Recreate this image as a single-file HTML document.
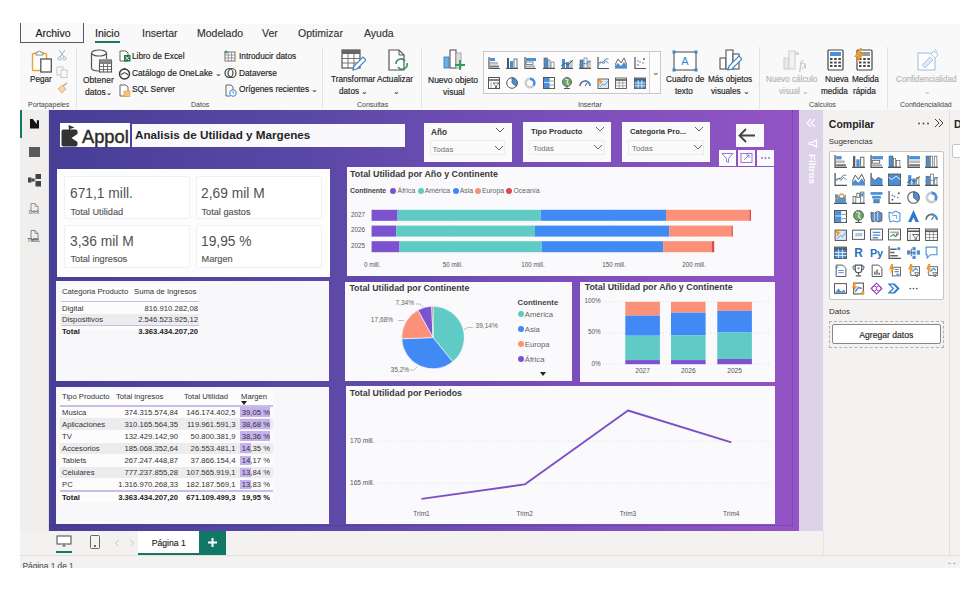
<!DOCTYPE html>
<html><head><meta charset="utf-8"><style>
*{margin:0;padding:0;box-sizing:border-box}
html,body{width:974px;height:589px;overflow:hidden;background:#fff;font-family:"Liberation Sans",sans-serif;color:#252423}
.a{position:absolute}
.t{position:absolute;white-space:nowrap;line-height:1}
.s{-webkit-text-stroke:0.15px currentColor}
#app{position:absolute;left:20px;top:24px;width:940px;height:544px;background:#f3f2f1;overflow:hidden}
#ribbon{position:absolute;left:20px;top:24px;width:940px;height:86px;background:#f9f9f9}
#canvas{position:absolute;left:49px;top:110px;width:750px;height:421px;background:linear-gradient(to right,#473e96 0%,#5a48a6 35%,#7a4fbb 68%,#9354c5 100%)}
.card{position:absolute;background:#faf9fc}
</style></head><body>

<svg width="0" height="0" style="position:absolute">
<defs>
<symbol id="sbar" viewBox="0 0 12 12"><path d="M1 0v11.5h11" stroke="#555" stroke-width="1.2" fill="none"/><rect x="2" y="1" width="5" height="3" fill="#4a90d9"/><rect x="2" y="5" width="8" height="2.5" fill="#bbb"/><rect x="2" y="8.5" width="9" height="2" fill="#777"/></symbol>
<symbol id="scol" viewBox="0 0 12 12"><path d="M0 11.5h12" stroke="#555" stroke-width="1.2"/><rect x="1" y="1" width="2" height="10" fill="#555"/><rect x="4" y="4" width="3" height="7" fill="#4a90d9"/><rect x="8" y="2" width="3" height="9" fill="#fff" stroke="#555" stroke-width="0.8"/></symbol>
<symbol id="cbar" viewBox="0 0 12 12"><path d="M1 0v11.5h11" stroke="#555" stroke-width="1.2" fill="none"/><rect x="2" y="1" width="10" height="3" fill="#4a90d9"/><rect x="2" y="5" width="7" height="2.5" fill="#fff" stroke="#555" stroke-width="0.7"/><rect x="2" y="8.5" width="9" height="2" fill="#aaa"/></symbol>
<symbol id="ccol" viewBox="0 0 12 12"><path d="M0 11.5h12" stroke="#555" stroke-width="1.2"/><rect x="1" y="1" width="3.5" height="10" fill="#4a90d9" stroke="#555" stroke-width="0.6"/><rect x="5" y="3" width="2" height="8" fill="#fff" stroke="#555" stroke-width="0.6"/><rect x="8" y="5" width="3" height="6" fill="#fff" stroke="#555" stroke-width="0.6"/></symbol>
<symbol id="lcol" viewBox="0 0 12 12"><path d="M0 11.5h12" stroke="#555" stroke-width="1.2"/><rect x="1" y="2" width="3" height="9" fill="#4a90d9"/><rect x="5" y="5" width="3" height="6" fill="#4a90d9"/><rect x="9" y="4" width="2" height="7" fill="#fff" stroke="#555" stroke-width="0.6"/><path d="M0 9l4-3 3 2 5-5" stroke="#555" stroke-width="0.9" fill="none"/></symbol>
<symbol id="lcc" viewBox="0 0 12 12"><path d="M0 11.5h12" stroke="#555" stroke-width="1.2"/><rect x="1" y="3" width="3" height="8" fill="#4a90d9" stroke="#555" stroke-width="0.6"/><rect x="5" y="1" width="3" height="10" fill="#fff" stroke="#555" stroke-width="0.6"/><rect x="9" y="4" width="2" height="7" fill="#fff" stroke="#555" stroke-width="0.6"/><path d="M0 8l4-2 3 1 5-3" stroke="#4a90d9" stroke-width="0.9" fill="none"/></symbol>
<symbol id="line" viewBox="0 0 12 12"><path d="M1 0v11.5h11" stroke="#555" stroke-width="1.2" fill="none"/><path d="M1.5 8l3-3 2 2 2-3 3 2" stroke="#4a90d9" stroke-width="0.9" fill="none"/><path d="M1.5 6l3-1 2 0 2-3 3 0" stroke="#555" stroke-width="0.7" fill="none"/></symbol>
<symbol id="area" viewBox="0 0 12 12"><path d="M0 11h12V8L9 1 6 6 3 2 0 8z" fill="#fff" stroke="#555" stroke-width="0.9"/><path d="M0 11h12V9L9 5 6 9 3 6 0 9z" fill="#4a90d9"/></symbol>
<symbol id="scat" viewBox="0 0 12 12"><path d="M1 0v11.5h11" stroke="#555" stroke-width="1.2" fill="none"/><circle cx="4" cy="8" r="0.8" fill="#555"/><circle cx="6" cy="5" r="0.8" fill="#4a90d9"/><circle cx="9" cy="6" r="0.8" fill="#4a90d9"/><circle cx="10" cy="2" r="0.9" fill="#555"/><circle cx="4" cy="4" r="0.8" fill="#4a90d9"/></symbol>
<symbol id="slic" viewBox="0 0 12 12"><rect x="0.5" y="0.5" width="11" height="11" fill="#fff" stroke="#555"/><path d="M0.5 3h11" stroke="#555" stroke-width="1.5"/><path d="M3 5v6" stroke="#aaa"/><path d="M5 6h6l-2.5 3v2h-1v-2z" fill="#fff" stroke="#555" stroke-width="0.8"/></symbol>
<symbol id="pie" viewBox="0 0 12 12"><circle cx="6" cy="6" r="5.3" fill="#fff" stroke="#555" stroke-width="1"/><path d="M6 6V0.7A5.3 5.3 0 0 1 10 9.5z" fill="#4a90d9" stroke="#555" stroke-width="0.7"/></symbol>
<symbol id="donut" viewBox="0 0 12 12"><circle cx="6" cy="6" r="4.3" fill="none" stroke="#ccc" stroke-width="2.4"/><path d="M6 1.7A4.3 4.3 0 0 1 9.5 8.5" fill="none" stroke="#4a90d9" stroke-width="2.4"/></symbol>
<symbol id="tree" viewBox="0 0 12 12"><rect x="0.5" y="0.5" width="11" height="11" fill="#fff" stroke="#555"/><rect x="1" y="1" width="6" height="10" fill="#4a90d9"/><path d="M1 5.5h6M7 1v10M7 4h4.5M7 8h4.5M9 8v3.5" stroke="#fff" stroke-width="0.7"/><path d="M7 4h4.5M7 8h4.5" stroke="#555" stroke-width="0.6"/></symbol>
<symbol id="map" viewBox="0 0 12 12"><circle cx="6" cy="5" r="4.5" fill="#6aa86a" stroke="#555" stroke-width="0.9"/><path d="M4 2l3 1-1 3 2 2" stroke="#c9f0c9" stroke-width="1.2" fill="none"/><path d="M6 9.5v2M3 11.5h6" stroke="#555" stroke-width="1"/></symbol>
<symbol id="gauge" viewBox="0 0 12 12"><path d="M1 9A5 5 0 0 1 11 9" fill="none" stroke="#666" stroke-width="1.5"/><path d="M6 4A5 5 0 0 1 11 9" fill="none" stroke="#4a90d9" stroke-width="2"/><path d="M6 9l2-3" stroke="#555" stroke-width="1"/></symbol>
<symbol id="card" viewBox="0 0 12 12"><rect x="1" y="2" width="10.5" height="9.5" fill="#dbe9f7" stroke="#555" stroke-width="0.9"/><path d="M3 1L1 5h2l-1 4 4-5H4l1-3z" fill="#f29a2e"/><path d="M3 10l3-3 2 1 3-4" stroke="#4a90d9" stroke-width="0.8" fill="none"/></symbol>
<symbol id="card2" viewBox="0 0 12 12"><rect x="0.5" y="2" width="11" height="8.5" fill="#fff" stroke="#555" stroke-width="0.9"/><path d="M2.5 4.5h7v3.5h-7z" fill="#cfe2f5"/><text x="6" y="7.6" font-size="3.6" text-anchor="middle" fill="#4a90d9" font-family="Liberation Sans">123</text></symbol>
<symbol id="table" viewBox="0 0 12 12"><rect x="0.5" y="1" width="11" height="10.5" fill="#fff" stroke="#555" stroke-width="0.9"/><path d="M0.5 3h11" stroke="#555" stroke-width="1.6"/><path d="M0.5 6h11M0.5 8.8h11M4.2 3v8.5M7.8 3v8.5" stroke="#777" stroke-width="0.6"/></symbol>
<symbol id="matrix" viewBox="0 0 12 12"><rect x="0.5" y="1" width="11" height="10.5" fill="#4a90d9" stroke="#555" stroke-width="0.9"/><path d="M0.5 3h11" stroke="#555" stroke-width="1.6"/><path d="M0.5 6h11M0.5 8.8h11M4.2 3v8.5M7.8 3v8.5" stroke="#fff" stroke-width="0.7"/></symbol>
<symbol id="bar100" viewBox="0 0 12 12"><path d="M1 0v11.5h11" stroke="#555" stroke-width="1.2" fill="none"/><rect x="2" y="1" width="10" height="3" fill="#4a90d9"/><rect x="2" y="5" width="10" height="2.5" fill="#bbb"/><rect x="2" y="8.5" width="10" height="2" fill="#777"/></symbol>
<symbol id="col100" viewBox="0 0 12 12"><path d="M0 11.5h12" stroke="#555" stroke-width="1.2"/><rect x="1" y="1" width="3" height="10" fill="#4a90d9" stroke="#555" stroke-width="0.6"/><rect x="5" y="1" width="2" height="10" fill="#fff" stroke="#555" stroke-width="0.6"/><rect x="8.5" y="1" width="2.5" height="10" fill="#fff" stroke="#555" stroke-width="0.6"/></symbol>
<symbol id="sarea" viewBox="0 0 12 12"><path d="M1 0v11.5h11" stroke="#555" stroke-width="1.2" fill="none"/><path d="M1.5 11V4l3 3 3-3 4 2v5z" fill="#4a90d9"/><path d="M1.5 4l3 3 3-3 4 2" stroke="#555" stroke-width="0.7" fill="none"/></symbol>
<symbol id="area100" viewBox="0 0 12 12"><rect x="0.5" y="1" width="11" height="10.5" fill="#4a90d9" stroke="#555" stroke-width="0.9"/><path d="M0.5 4l3 2 4-3 4 3" stroke="#fff" stroke-width="0.8" fill="none"/></symbol>
<symbol id="ribb" viewBox="0 0 12 12"><path d="M0 11.5h12" stroke="#555" stroke-width="1.2"/><path d="M1 3h2l3 3h2l3-3v8H1z" fill="#5a8fd0"/><path d="M1 7h2l3-4h2l3 4" stroke="#e49b3a" stroke-width="1.2" fill="none"/></symbol>
<symbol id="water" viewBox="0 0 12 12"><path d="M0 11.5h12" stroke="#555" stroke-width="1.2"/><rect x="1" y="5" width="2.5" height="6" fill="#fff" stroke="#555" stroke-width="0.7"/><rect x="4.5" y="2" width="2.5" height="4" fill="#fff" stroke="#555" stroke-width="0.7"/><rect x="8" y="1" width="3" height="10" fill="#fff" stroke="#555" stroke-width="0.7"/><rect x="8.5" y="2" width="2" height="3" fill="#4a90d9"/></symbol>
<symbol id="funnel" viewBox="0 0 12 12"><rect x="0.5" y="1" width="11" height="2.5" fill="#4a90d9"/><rect x="2" y="4.5" width="8" height="2.5" fill="#4a90d9"/><rect x="3.5" y="8" width="5" height="3" fill="#4a90d9" stroke="#555" stroke-width="0.5"/></symbol>
<symbol id="fmap" viewBox="0 0 12 12"><path d="M1 2l3 1 3-2 4 2v7l-3 1-3-1-3 1-1-4z" fill="#5a8fd0" stroke="#555" stroke-width="0.8"/><path d="M4 3v7M7 1v9" stroke="#fff" stroke-width="0.6"/></symbol>
<symbol id="smap" viewBox="0 0 12 12"><path d="M1 2l3 1 3-2 4 2v7l-3 1-3-1-3 1-1-4z" fill="#fff" stroke="#4a90d9" stroke-width="1"/><path d="M4 5h4v3" stroke="#4a90d9" stroke-width="0.8" fill="none"/></symbol>
<symbol id="azure" viewBox="0 0 12 12"><path d="M6 0L1 11h3l2-4 2 4h3z" fill="#2a7ad2"/></symbol>
<symbol id="kpi" viewBox="0 0 12 12"><rect x="0.5" y="1" width="11" height="10" fill="#fff" stroke="#555" stroke-width="0.9"/><path d="M2 4h8" stroke="#aaa" stroke-width="1.5"/><path d="M2 8l3-2 2 2 3-3" stroke="#3a9a50" stroke-width="1" fill="none"/><path d="M7 5l2 0-1 2z" fill="#d04a3a"/></symbol>
<symbol id="mcard" viewBox="0 0 12 12"><rect x="0.5" y="1" width="11" height="10" fill="#fff" stroke="#555" stroke-width="0.9"/><path d="M2.5 4h7M2.5 6.5h7M2.5 9h5" stroke="#4a90d9" stroke-width="1.2"/></symbol>
<symbol id="R" viewBox="0 0 12 12"><text x="6" y="10.5" font-size="11" font-weight="bold" text-anchor="middle" fill="#2a6fbf" font-family="Liberation Sans">R</text></symbol>
<symbol id="Py" viewBox="0 0 12 12"><text x="6" y="10" font-size="10" font-weight="bold" text-anchor="middle" fill="#2a6fbf" font-family="Liberation Sans">Py</text></symbol>
<symbol id="keyi" viewBox="0 0 12 12"><path d="M1 0v11.5h11" stroke="#555" stroke-width="1.1" fill="none"/><path d="M2 3h6M2 6h4M2 9h7" stroke="#666" stroke-width="1.2"/><circle cx="10" cy="2.5" r="1.5" fill="#4a90d9"/></symbol>
<symbol id="decomp" viewBox="0 0 12 12"><rect x="0" y="4" width="3" height="4" fill="#4a90d9"/><rect x="5" y="1" width="3" height="3" fill="#4a90d9"/><rect x="5" y="5" width="3" height="3" fill="#4a90d9"/><rect x="5" y="9" width="3" height="3" fill="#4a90d9"/><rect x="9" y="4" width="3" height="4" fill="#4a90d9"/><path d="M3 6h2M4 2.5v7" stroke="#555" stroke-width="0.8"/></symbol>
<symbol id="qa" viewBox="0 0 12 12"><path d="M1 1h10v7H5l-3 3V8H1z" fill="#fff" stroke="#4a90d9" stroke-width="1"/></symbol>
<symbol id="narr" viewBox="0 0 12 12"><path d="M2 1h6l3 3v7.5H2z" fill="#fff" stroke="#555" stroke-width="0.9"/><path d="M4 6h5M4 8h5" stroke="#4a90d9" stroke-width="0.9"/><path d="M1 3h3M2.5 1.5v3" stroke="#4a90d9" stroke-width="0.8"/></symbol>
<symbol id="troph" viewBox="0 0 12 12"><path d="M3 1h6v4a3 3 0 0 1-6 0z" fill="#fff" stroke="#555" stroke-width="1.1"/><path d="M3 2H1v1.5a2 2 0 0 0 2 2M9 2h2v1.5a2 2 0 0 1-2 2" fill="none" stroke="#555" stroke-width="0.9"/><path d="M6 8v2M3.5 11h5" stroke="#555" stroke-width="1.2"/><circle cx="6" cy="4" r="1" fill="#4a90d9"/></symbol>
<symbol id="pagin" viewBox="0 0 12 12"><path d="M2 1h6l3 3v7.5H2z" fill="#fff" stroke="#555" stroke-width="0.9"/><path d="M4.5 10V7M6.5 10V5M8.5 10V8" stroke="#555" stroke-width="1.2"/></symbol>
<symbol id="papps" viewBox="0 0 12 12"><rect x="4" y="3" width="7.5" height="8" fill="#fff" stroke="#555" stroke-width="0.8"/><path d="M6 5h4M6 7h4" stroke="#888"/><path d="M3 0L1 5h2l-1 4 4-5H4l1-4z" fill="#f29a2e"/><path d="M7 9l2 2 2-2" fill="#4a90d9"/></symbol>
<symbol id="papps2" viewBox="0 0 12 12"><rect x="3.5" y="2.5" width="8" height="8" fill="#fff" stroke="#555" stroke-width="0.8"/><path d="M3 0L1 5h2l-1 4 4-5H4l1-4z" fill="#f29a2e"/><path d="M5 7l3-3 2 2" stroke="#4a90d9" stroke-width="1.2" fill="none"/><path d="M7 8h4l-1.5 2v2h-1v-2z" fill="#fff" stroke="#555" stroke-width="0.7"/></symbol>
<symbol id="img" viewBox="0 0 12 12"><rect x="0.5" y="1.5" width="11" height="9" fill="#fff" stroke="#555" stroke-width="0.9"/><path d="M1 10l3-4 3 3 2-2 2 3z" fill="#4a90d9"/></symbol>
<symbol id="custom" viewBox="0 0 12 12"><rect x="1.5" y="1" width="9" height="10" fill="#fff" stroke="#555" stroke-width="1"/><path d="M3 9l3-4 3 1" stroke="#4a90d9" stroke-width="1.4" fill="none"/><path d="M2 0L0 5h2l-1 4 4-5H3l1-4z" fill="#f29a2e"/><circle cx="10" cy="10" r="1.6" fill="#f29a2e"/></symbol>
<symbol id="fabric" viewBox="0 0 12 12"><path d="M6 1l5 5-5 5-5-5z" fill="#fff" stroke="#a04ac0" stroke-width="1"/><circle cx="4" cy="6" r="2.2" fill="none" stroke="#a04ac0" stroke-width="0.9"/><circle cx="8" cy="6" r="2.2" fill="none" stroke="#a04ac0" stroke-width="0.9"/></symbol>
<symbol id="pauto" viewBox="0 0 12 12"><path d="M1 2h5l4 4-4 4H1l4-4z" fill="#fff" stroke="#2a7ad2" stroke-width="1.1"/><path d="M5 2l4 4-4 4" fill="none" stroke="#2a7ad2" stroke-width="1"/></symbol>
<symbol id="dots" viewBox="0 0 12 12"><circle cx="3" cy="6" r="0.8" fill="#555"/><circle cx="6" cy="6" r="0.8" fill="#555"/><circle cx="9" cy="6" r="0.8" fill="#555"/></symbol>
</defs></svg>
<div id="app"></div>
<div id="ribbon"></div>
<!-- left nav -->
<div class="a" style="left:20px;top:110px;width:29px;height:421px;background:#f0efee;border-right:1px solid #e1dfdd"></div>
<div id="canvas"></div>
<!-- filters pane -->
<div class="a" style="left:799px;top:110px;width:24px;height:421px;background:#dcd2e8"></div>
<!-- build pane -->
<div class="a" style="left:823px;top:110px;width:126px;height:445px;background:#f3f2f1"></div>
<div class="a" style="left:949px;top:110px;width:11px;height:445px;background:#f3f2f1;border-left:1px solid #e1dfdd"></div>
<!-- tab bar -->
<div class="a" style="left:49px;top:531px;width:750px;height:24px;background:#f3f2f1"></div>
<!-- status -->
<div class="a" style="left:20px;top:555px;width:940px;height:13px;background:#f3f2f1;border-top:1px solid #e1dfdd"></div>


<!-- RIBBON -->
<div class="a" style="left:20px;top:23px;width:64px;height:20px;border:1.5px solid #5a5a5a;border-top:none;background:#fafafa"></div>
<div class="t s" style="left:35.5px;top:28px;font-size:10.5px;color:#1a1a1a">Archivo</div>
<div class="t s" style="left:95px;top:28px;font-size:10.5px;color:#222">Inicio</div>
<div class="a" style="left:95px;top:41px;width:25px;height:2px;background:#1b7a62"></div>
<div class="t s" style="left:142px;top:28px;font-size:10.5px;color:#333">Insertar</div>
<div class="t s" style="left:197px;top:28px;font-size:10.5px;color:#333">Modelado</div>
<div class="t s" style="left:262px;top:28px;font-size:10.5px;color:#333">Ver</div>
<div class="t s" style="left:298px;top:28px;font-size:10.5px;color:#333">Optimizar</div>
<div class="t s" style="left:364px;top:28px;font-size:10.5px;color:#333">Ayuda</div>
<!-- separators -->
<div class="a" style="left:76px;top:47px;width:1px;height:62px;background:#e3e3e3"></div>
<div class="a" style="left:322px;top:47px;width:1px;height:62px;background:#e3e3e3"></div>
<div class="a" style="left:421px;top:47px;width:1px;height:62px;background:#e3e3e3"></div>
<div class="a" style="left:759px;top:47px;width:1px;height:62px;background:#e3e3e3"></div>
<div class="a" style="left:887px;top:47px;width:1px;height:62px;background:#e3e3e3"></div>
<!-- group labels -->
<div class="t" style="left:28px;top:101px;font-size:7px;color:#444">Portapapeles</div>
<div class="t" style="left:191px;top:101px;font-size:7px;color:#444">Datos</div>
<div class="t" style="left:357px;top:101px;font-size:7px;color:#444">Consultas</div>
<div class="t" style="left:578px;top:101px;font-size:7px;color:#444">Insertar</div>
<div class="t" style="left:809px;top:101px;font-size:7px;color:#444">Cálculos</div>
<div class="t" style="left:900px;top:101px;font-size:7px;color:#444">Confidencialidad</div>
<!-- Pegar -->
<svg class="a" style="left:31px;top:50px" width="22" height="23" viewBox="0 0 22 23"><rect x="1.5" y="3.5" width="14" height="17" rx="1" fill="#fff" stroke="#e8a23a" stroke-width="1.4"/><path d="M5 3.5v-1.2h2.2a1.3 1.3 0 0 1 2.6 0H12v2.7H5z" fill="#fff" stroke="#888" stroke-width="1"/><rect x="9.8" y="9" width="10.5" height="13" fill="#fff" stroke="#555" stroke-width="1.3"/></svg>
<div class="t s" style="left:30px;top:76px;font-size:8.2px;color:#222">Pegar</div>
<svg class="a" style="left:57px;top:49px" width="10" height="12" viewBox="0 0 10 12"><path d="M2 1l5 7M8 1L3 8" stroke="#9fb4c8" stroke-width="1" fill="none"/><circle cx="2.5" cy="9.5" r="1.6" fill="none" stroke="#9fb4c8"/><circle cx="7.5" cy="9.5" r="1.6" fill="none" stroke="#9fb4c8"/></svg>
<svg class="a" style="left:56px;top:66px" width="13" height="12" viewBox="0 0 13 12"><rect x="1" y="1" width="6" height="8" fill="none" stroke="#c8c8c8"/><rect x="5" y="4" width="6" height="7.5" fill="#fafafa" stroke="#c8c8c8"/></svg>
<svg class="a" style="left:56px;top:82px" width="13" height="12" viewBox="0 0 13 12"><path d="M2 7l4-4 4 4-4 4z" fill="#f6d4b0" stroke="#eaa160" stroke-width="0.8"/><path d="M7 4l4-3" stroke="#bbb" stroke-width="1.6"/></svg>
<!-- Obtener datos -->
<svg class="a" style="left:90px;top:49px" width="23" height="25" viewBox="0 0 23 25"><ellipse cx="9" cy="4" rx="7.5" ry="3" fill="none" stroke="#555" stroke-width="1.2"/><path d="M1.5 4v15c0 1.7 3.4 3 7.5 3" fill="none" stroke="#555" stroke-width="1.2"/><path d="M16.5 4v6" stroke="#555" stroke-width="1.2"/><rect x="9.5" y="11" width="12" height="12" fill="#fff" stroke="#555" stroke-width="1.1"/><path d="M9.5 14.5h12M9.5 17.5h12M9.5 20.5h12M13.5 14.5v8.5M17.5 14.5v8.5" stroke="#555" stroke-width="0.8"/><rect x="9.5" y="11" width="12" height="3.5" fill="#888"/></svg>
<div class="t s" style="left:83px;top:76px;font-size:8.5px;color:#222">Obtener</div>
<div class="t s" style="left:85px;top:88px;font-size:8.5px;color:#222">datos<span style="font-size:7px">&#8964;</span></div>
<!-- data source list -->
<svg class="a" style="left:119px;top:50px" width="12" height="12" viewBox="0 0 12 12"><path d="M1 1h6l2 2v8H1z" fill="#fff" stroke="#666" stroke-width="1"/><rect x="5" y="5" width="6.5" height="6.5" fill="#1d7a45"/><path d="M6.5 6.5l3.5 3.5M10 6.5L6.5 10" stroke="#fff" stroke-width="0.9"/></svg>
<div class="t s" style="left:132px;top:52px;font-size:8.3px;color:#222">Libro de Excel</div>
<svg class="a" style="left:118px;top:67px" width="13" height="13" viewBox="0 0 13 13"><circle cx="6.5" cy="7" r="5" fill="none" stroke="#333" stroke-width="1.4"/><path d="M3 8c2-3 5-3 7 0" fill="none" stroke="#333" stroke-width="1.2"/><path d="M6.5 1v2" stroke="#333" stroke-width="1.2"/></svg>
<div class="t s" style="left:132px;top:68.5px;font-size:8.3px;color:#222">Catálogo de OneLake &#8964;</div>
<svg class="a" style="left:119px;top:84px" width="12" height="13" viewBox="0 0 12 13"><path d="M1 1h6l2 2v9H1z" fill="#fff" stroke="#666" stroke-width="1"/><rect x="5" y="7" width="6" height="5.5" fill="#f6c27a" stroke="#e09a3a" stroke-width="0.6"/></svg>
<div class="t s" style="left:132px;top:85px;font-size:8.3px;color:#222">SQL Server</div>
<svg class="a" style="left:224px;top:50px" width="12" height="12" viewBox="0 0 12 12"><rect x="1" y="2" width="10" height="9" fill="#fff" stroke="#666" stroke-width="0.9"/><path d="M1 5h10M1 8h10M4.3 2v9M7.6 2v9" stroke="#777" stroke-width="0.7"/><path d="M2 0.5v3M0.5 2h3" stroke="#1d8a50" stroke-width="1"/></svg>
<div class="t s" style="left:239px;top:51.5px;font-size:8.3px;color:#222">Introducir datos</div>
<svg class="a" style="left:224px;top:67px" width="13" height="12" viewBox="0 0 13 12"><ellipse cx="5" cy="6" rx="4" ry="4.5" fill="none" stroke="#444" stroke-width="1.2"/><ellipse cx="8" cy="6" rx="4" ry="4.5" fill="none" stroke="#444" stroke-width="1.2"/></svg>
<div class="t s" style="left:239px;top:68.5px;font-size:8.3px;color:#222">Dataverse</div>
<svg class="a" style="left:225px;top:84px" width="12" height="13" viewBox="0 0 12 13"><path d="M1 1h5l2 2v3" fill="none" stroke="#666" stroke-width="1"/><path d="M1 1v11h4" fill="none" stroke="#666" stroke-width="1"/><circle cx="8" cy="9" r="3.3" fill="#fff" stroke="#3a86c8" stroke-width="1"/><path d="M8 7v2h1.5" stroke="#3a86c8" stroke-width="0.8" fill="none"/></svg>
<div class="t s" style="left:239px;top:85px;font-size:8.3px;color:#222">Orígenes recientes &#8964;</div>
<!-- Transformar / Actualizar / Nuevo objeto -->
<svg class="a" style="left:341px;top:49px" width="25" height="23" viewBox="0 0 25 23"><rect x="1" y="1" width="18" height="18" fill="#fff" stroke="#555" stroke-width="1.2"/><rect x="1" y="1" width="18" height="4" fill="#666"/><path d="M1 9.5h18M1 14h18M7 5v14M13 5v14" stroke="#666" stroke-width="0.9"/><path d="M12 21l1-4 9-9 3 3-9 9z" fill="#fff" stroke="#3a86c8" stroke-width="1.2"/></svg>
<div class="t s" style="left:331px;top:76px;font-size:8.2px;color:#222">Transformar</div>
<div class="t s" style="left:339px;top:88px;font-size:8.2px;color:#222">datos &#8964;</div>
<svg class="a" style="left:387px;top:49px" width="22" height="23" viewBox="0 0 22 23"><path d="M2 1h10l5 5v15H2z" fill="#fff" stroke="#555" stroke-width="1.2"/><path d="M12 1v5h5" fill="none" stroke="#555" stroke-width="1"/><path d="M9 15a5 5 0 0 1 9-3M20 14a5 5 0 0 1-9 4" fill="none" stroke="#2f9a55" stroke-width="1.6"/></svg>
<div class="t s" style="left:377px;top:76px;font-size:8.2px;color:#222">Actualizar</div>
<div class="t s" style="left:393px;top:88px;font-size:8.2px;color:#222">&#8964;</div>
<svg class="a" style="left:442px;top:48px" width="24" height="24" viewBox="0 0 24 24"><rect x="2" y="9" width="5" height="11" fill="#6aaee8" stroke="#3a78b8" stroke-width="0.8"/><rect x="8" y="2" width="6" height="18" fill="#fff" stroke="#555" stroke-width="1.1"/><rect x="14" y="5" width="5" height="15" fill="#ddd" stroke="#999" stroke-width="0.8"/><path d="M18 12v10M13 17h10" stroke="#2f9a55" stroke-width="1.8"/></svg>
<div class="t s" style="left:428px;top:76px;font-size:8.5px;color:#222">Nuevo objeto</div>
<div class="t s" style="left:443px;top:88px;font-size:8.5px;color:#222">visual</div>

<div class="a" style="left:483px;top:51px;width:178px;height:43px;border:1px solid #c8c8c8;background:#fcfcfc"></div>
<div class="a" style="left:649px;top:52px;width:1px;height:41px;background:#d6d6d6"></div>
<div class="t" style="left:652px;top:68px;font-size:9px;color:#444">&#8964;</div>
<svg class="a" style="left:488.0px;top:57px" width="12" height="12"><use href="#sbar"/></svg>
<svg class="a" style="left:506.2px;top:57px" width="12" height="12"><use href="#scol"/></svg>
<svg class="a" style="left:524.4px;top:57px" width="12" height="12"><use href="#cbar"/></svg>
<svg class="a" style="left:542.6px;top:57px" width="12" height="12"><use href="#ccol"/></svg>
<svg class="a" style="left:560.8px;top:57px" width="12" height="12"><use href="#lcol"/></svg>
<svg class="a" style="left:579.0px;top:57px" width="12" height="12"><use href="#lcc"/></svg>
<svg class="a" style="left:597.2px;top:57px" width="12" height="12"><use href="#line"/></svg>
<svg class="a" style="left:615.4px;top:57px" width="12" height="12"><use href="#area"/></svg>
<svg class="a" style="left:633.6px;top:57px" width="12" height="12"><use href="#scat"/></svg>
<svg class="a" style="left:488.0px;top:77px" width="12" height="12"><use href="#slic"/></svg>
<svg class="a" style="left:506.2px;top:77px" width="12" height="12"><use href="#pie"/></svg>
<svg class="a" style="left:524.4px;top:77px" width="12" height="12"><use href="#donut"/></svg>
<svg class="a" style="left:542.6px;top:77px" width="12" height="12"><use href="#tree"/></svg>
<svg class="a" style="left:560.8px;top:77px" width="12" height="12"><use href="#map"/></svg>
<svg class="a" style="left:579.0px;top:77px" width="12" height="12"><use href="#gauge"/></svg>
<svg class="a" style="left:597.2px;top:77px" width="12" height="12"><use href="#card"/></svg>
<svg class="a" style="left:615.4px;top:77px" width="12" height="12"><use href="#table"/></svg>
<svg class="a" style="left:633.6px;top:77px" width="12" height="12"><use href="#matrix"/></svg>

<!-- Cuadro de texto -->
<svg class="a" style="left:672px;top:50px" width="26" height="22" viewBox="0 0 26 22"><rect x="2" y="2" width="22" height="18" fill="#fff" stroke="#555" stroke-width="1.1"/><rect x="0.5" y="0.5" width="3" height="3" fill="#3a86c8"/><rect x="22.5" y="0.5" width="3" height="3" fill="#3a86c8"/><rect x="0.5" y="18.5" width="3" height="3" fill="#3a86c8"/><rect x="22.5" y="18.5" width="3" height="3" fill="#3a86c8"/><text x="13" y="15" font-size="11" text-anchor="middle" fill="#3a86c8" font-family="Liberation Sans">A</text></svg>
<div class="t s" style="left:666px;top:76px;font-size:8.2px;color:#222">Cuadro de</div>
<div class="t s" style="left:675px;top:88px;font-size:8.2px;color:#222">texto</div>
<svg class="a" style="left:719px;top:48px" width="23" height="24" viewBox="0 0 23 24"><rect x="1" y="10" width="6" height="11" fill="#fff" stroke="#555" stroke-width="1.1"/><rect x="7" y="2" width="7" height="19" fill="#fff" stroke="#555" stroke-width="1.1"/><rect x="14" y="6" width="6" height="15" fill="#fff" stroke="#555" stroke-width="1.1"/><path d="M9 22l1-4 10-10 3 3-10 10z" fill="#fff" stroke="#3a86c8" stroke-width="1.2"/></svg>
<div class="t s" style="left:708px;top:76px;font-size:8.2px;color:#222">Más objetos</div>
<div class="t s" style="left:711px;top:88px;font-size:8.2px;color:#222">visuales &#8964;</div>
<svg class="a" style="left:782px;top:48px" width="24" height="24" viewBox="0 0 24 24"><rect x="2" y="10" width="5" height="11" fill="#e8e8e8" stroke="#ccc"/><rect x="7" y="3" width="6" height="18" fill="#f2f2f2" stroke="#ccc"/><text x="17" y="21" font-size="12" font-style="italic" fill="#bbb" font-family="Liberation Serif">fx</text><rect x="13" y="4" width="4" height="3" fill="#c8daf0"/></svg>
<div class="t s" style="left:766px;top:76px;font-size:8.2px;color:#b5b5b5">Nuevo cálculo</div>
<div class="t s" style="left:779px;top:88px;font-size:8.2px;color:#b5b5b5">visual &#8964;</div>
<svg class="a" style="left:827px;top:49px" width="17" height="22" viewBox="0 0 17 22"><rect x="1" y="1" width="15" height="20" rx="1" fill="#fff" stroke="#444" stroke-width="1.2"/><rect x="3" y="3" width="11" height="4" fill="#4a90d9"/><g fill="#444"><rect x="3" y="9" width="2.5" height="2"/><rect x="7.2" y="9" width="2.5" height="2"/><rect x="11.4" y="9" width="2.5" height="2"/><rect x="3" y="12.5" width="2.5" height="2"/><rect x="7.2" y="12.5" width="2.5" height="2"/><rect x="11.4" y="12.5" width="2.5" height="2"/><rect x="3" y="16" width="2.5" height="2"/><rect x="7.2" y="16" width="2.5" height="2"/><rect x="11.4" y="16" width="2.5" height="2"/></g></svg>
<div class="t s" style="left:825px;top:76px;font-size:8.2px;color:#222">Nueva</div>
<div class="t s" style="left:821px;top:88px;font-size:8.2px;color:#222">medida</div>
<svg class="a" style="left:853px;top:48px" width="21" height="23" viewBox="0 0 21 23"><rect x="4" y="2" width="15" height="20" rx="1" fill="#fff" stroke="#444" stroke-width="1.2"/><rect x="6" y="4" width="11" height="4" fill="#999"/><g fill="#444"><rect x="6" y="10" width="2.5" height="2"/><rect x="10.2" y="10" width="2.5" height="2"/><rect x="14.4" y="10" width="2.5" height="2"/><rect x="6" y="13.5" width="2.5" height="2"/><rect x="10.2" y="13.5" width="2.5" height="2"/><rect x="14.4" y="13.5" width="2.5" height="2"/><rect x="6" y="17" width="2.5" height="2"/><rect x="10.2" y="17" width="2.5" height="2"/><rect x="14.4" y="17" width="2.5" height="2"/></g><path d="M7 0L1 9h4l-2 7 8-10H7l2-6z" fill="#f29a2e"/></svg>
<div class="t s" style="left:852px;top:76px;font-size:8.2px;color:#222">Medida</div>
<div class="t s" style="left:853px;top:88px;font-size:8.2px;color:#222">rápida</div>
<svg class="a" style="left:916px;top:48px" width="24" height="24" viewBox="0 0 24 24"><rect x="2" y="5" width="17" height="17" fill="#fff" stroke="#a9c9e6" stroke-width="1.2"/><path d="M6 17l8-8 3 3-8 8z" fill="#dcebf7" stroke="#a9c9e6"/><path d="M15 6l3-3 4 4-3 3z" fill="#fff" stroke="#a9c9e6"/><path d="M19 1l1 2M22 4l-2 0" stroke="#a9c9e6"/></svg>
<div class="t s" style="left:896px;top:76px;font-size:8.2px;color:#b5b5b5">Confidencialidad</div>
<div class="t s" style="left:924px;top:88px;font-size:8.2px;color:#b5b5b5">&#8964;</div>

<!-- cards -->
<div class="card" style="left:60px;top:123px;width:70px;height:24px;background:#fff"></div>
<svg class="a" style="left:60px;top:124px" width="20" height="23" viewBox="0 0 20 23"><path d="M3.5 5.5h12a2 2 0 0 1 2 2v2.5l-6 4 6 4v2.5a2 2 0 0 1-2 2h-12a2 2 0 0 1-2-2v-13a2 2 0 0 1 2-2z" fill="#333"/><path d="M8.5 1l6 2.5-4.5 1.5-1 1z" fill="#333"/><path d="M9.5 4v2" stroke="#333" stroke-width="1"/></svg>
<div class="t" style="left:82px;top:128px;font-size:18.3px;color:#2b2b2b;letter-spacing:0;-webkit-text-stroke:0.45px #2b2b2b">Appol</div>
<div class="card" style="left:132px;top:124px;width:273px;height:23px;background:#f9f9fb"></div>
<div class="t" style="left:135px;top:129px;font-size:11.7px;font-weight:bold;-webkit-text-stroke:0;color:#252525">Analisis de Utilidad y Margenes</div>

<div class="card" style="left:424px;top:123px;width:88px;height:39px;background:#fafafb"></div>
<div class="a" style="left:430px;top:140px;width:75px;height:15px;border:1px solid #ececf0"></div>
<div class="t" style="left:431px;top:128.5px;font-size:8.2px;font-weight:bold;-webkit-text-stroke:0;color:#333">Año</div>
<div class="t" style="left:432.5px;top:146px;font-size:7.8px;color:#707070">Todas</div>
<svg class="a" style="left:495px;top:127px" width="10" height="6" viewBox="0 0 10 6"><path d="M1 1l4 4 4-4" fill="none" stroke="#666" stroke-width="1"/></svg>
<svg class="a" style="left:494px;top:145px" width="10" height="6" viewBox="0 0 10 6"><path d="M1 1l4 4 4-4" fill="none" stroke="#666" stroke-width="1"/></svg>

<div class="card" style="left:523px;top:122px;width:88px;height:40px;background:#fafafb"></div>
<div class="a" style="left:529px;top:140px;width:76px;height:15px;border:1px solid #ececf0"></div>
<div class="t" style="left:531px;top:127.5px;font-size:7.6px;font-weight:bold;-webkit-text-stroke:0;color:#333">Tipo Producto</div>
<div class="t" style="left:533px;top:145px;font-size:7.8px;color:#707070">Todas</div>
<svg class="a" style="left:595px;top:126px" width="10" height="6" viewBox="0 0 10 6"><path d="M1 1l4 4 4-4" fill="none" stroke="#666" stroke-width="1"/></svg>
<svg class="a" style="left:593px;top:144px" width="10" height="6" viewBox="0 0 10 6"><path d="M1 1l4 4 4-4" fill="none" stroke="#666" stroke-width="1"/></svg>

<div class="card" style="left:622px;top:122px;width:88px;height:40px;background:#fafafb"></div>
<div class="a" style="left:628px;top:140px;width:76px;height:15px;border:1px solid #ececf0"></div>
<div class="t" style="left:630px;top:127.5px;font-size:7.6px;font-weight:bold;-webkit-text-stroke:0;color:#333">Categoria Pro...</div>
<div class="t" style="left:632px;top:145px;font-size:7.8px;color:#707070">Todas</div>
<svg class="a" style="left:694px;top:126px" width="10" height="6" viewBox="0 0 10 6"><path d="M1 1l4 4 4-4" fill="none" stroke="#666" stroke-width="1"/></svg>
<svg class="a" style="left:693px;top:144px" width="10" height="6" viewBox="0 0 10 6"><path d="M1 1l4 4 4-4" fill="none" stroke="#666" stroke-width="1"/></svg>

<div class="card" style="left:736px;top:124px;width:28px;height:23px;background:#fafafb"></div>
<svg class="a" style="left:737px;top:127px" width="20" height="17" viewBox="0 0 20 17"><path d="M18 8.5H3M9 2L2.5 8.5 9 15" fill="none" stroke="#444" stroke-width="1.8"/></svg>
<div class="card" style="left:719px;top:150px;width:17px;height:16px;background:#fbfaff"></div>
<div class="card" style="left:738px;top:150px;width:17px;height:16px;background:#fbfaff"></div>
<div class="card" style="left:757px;top:150px;width:17px;height:16px;background:#fbfaff"></div>
<svg class="a" style="left:721px;top:152px" width="13" height="12" viewBox="0 0 13 12"><path d="M1 1.5h11L7.5 6.5v4l-2 -1v-3z" fill="none" stroke="#8a6bc8" stroke-width="0.9"/></svg>
<svg class="a" style="left:740px;top:152px" width="13" height="12" viewBox="0 0 13 12"><rect x="1" y="1.5" width="11" height="9" fill="none" stroke="#8a6bc8" stroke-width="0.9"/><path d="M4 8l5-5M6 3h3v3" fill="none" stroke="#8a6bc8" stroke-width="0.8"/></svg>
<svg class="a" style="left:759px;top:152px" width="13" height="12" viewBox="0 0 13 12"><circle cx="3" cy="6" r="0.9" fill="#8a6bc8"/><circle cx="6.5" cy="6" r="0.9" fill="#8a6bc8"/><circle cx="10" cy="6" r="0.9" fill="#8a6bc8"/></svg>
<div class="card" style="left:57px;top:169px;width:273px;height:108px;background:#fdfdfe"></div>
<div class="a" style="left:64px;top:176px;width:126px;height:43px;background:#fff;border:1px solid #f1f1f3;border-radius:2px"></div>
<div class="t" style="left:70.0px;top:185px;font-size:15px;color:#505050;-webkit-text-stroke:0;transform:scaleX(0.92);transform-origin:0 0">671,1 mill.</div>
<div class="t s" style="left:70.5px;top:207.5px;font-size:9.2px;color:#555">Total Utilidad</div>
<div class="a" style="left:196px;top:176px;width:126px;height:43px;background:#fff;border:1px solid #f1f1f3;border-radius:2px"></div>
<div class="t" style="left:201.0px;top:185px;font-size:15px;color:#505050;-webkit-text-stroke:0;transform:scaleX(0.92);transform-origin:0 0">2,69 mil M</div>
<div class="t s" style="left:201.5px;top:207.5px;font-size:9.2px;color:#555">Total gastos</div>
<div class="a" style="left:64px;top:225px;width:126px;height:43px;background:#fff;border:1px solid #f1f1f3;border-radius:2px"></div>
<div class="t" style="left:70.0px;top:233px;font-size:15px;color:#505050;-webkit-text-stroke:0;transform:scaleX(0.92);transform-origin:0 0">3,36 mil M</div>
<div class="t s" style="left:70.5px;top:255px;font-size:9.2px;color:#555">Total ingresos</div>
<div class="a" style="left:196px;top:225px;width:126px;height:43px;background:#fff;border:1px solid #f1f1f3;border-radius:2px"></div>
<div class="t" style="left:201.0px;top:233px;font-size:15px;color:#505050;-webkit-text-stroke:0;transform:scaleX(0.92);transform-origin:0 0">19,95 %</div>
<div class="t s" style="left:201.5px;top:255px;font-size:9.2px;color:#555">Margen</div>

<div class="card" style="left:347px;top:167px;width:427px;height:109px;background:#faf9fc"></div>
<div class="t" style="left:350px;top:169.5px;font-size:8.9px;font-weight:bold;-webkit-text-stroke:0;color:#3a3a3a">Total Utilidad por Año y Continente</div>
<div class="t" style="left:350px;top:187.5px;font-size:6.95px;font-weight:bold;-webkit-text-stroke:0;color:#444">Continente</div>
<div class="a" style="left:390.0px;top:188.2px;width:6px;height:6px;border-radius:50%;background:#7d52cf"></div>
<div class="t" style="left:397.6px;top:187.5px;font-size:6.9px;color:#666">África</div>
<div class="a" style="left:417.6px;top:188.2px;width:6px;height:6px;border-radius:50%;background:#5fcbc4"></div>
<div class="t" style="left:424.7px;top:187.5px;font-size:6.9px;color:#666">América</div>
<div class="a" style="left:452.7px;top:188.2px;width:6px;height:6px;border-radius:50%;background:#418af5"></div>
<div class="t" style="left:459.7px;top:187.5px;font-size:6.9px;color:#666">Asia</div>
<div class="a" style="left:474.8px;top:188.2px;width:6px;height:6px;border-radius:50%;background:#fb9178"></div>
<div class="t" style="left:481.9px;top:187.5px;font-size:6.9px;color:#666">Europa</div>
<div class="a" style="left:506.0px;top:188.2px;width:6px;height:6px;border-radius:50%;background:#dc4b4b"></div>
<div class="t" style="left:513.5px;top:187.5px;font-size:6.9px;color:#666">Oceanía</div>
<svg class="a" style="left:347px;top:167px" width="427" height="109" viewBox="347 167 427 109"><line x1="372" y1="203" x2="372" y2="256" stroke="#eceaf0" stroke-width="0.6" stroke-dasharray="1 2"/><line x1="452" y1="203" x2="452" y2="256" stroke="#eceaf0" stroke-width="0.6" stroke-dasharray="1 2"/><line x1="532" y1="203" x2="532" y2="256" stroke="#eceaf0" stroke-width="0.6" stroke-dasharray="1 2"/><line x1="612" y1="203" x2="612" y2="256" stroke="#eceaf0" stroke-width="0.6" stroke-dasharray="1 2"/><line x1="692" y1="203" x2="692" y2="256" stroke="#eceaf0" stroke-width="0.6" stroke-dasharray="1 2"/><rect x="371.6" y="209.8" width="26.0" height="11" fill="#7d52cf"/><rect x="397.6" y="209.8" width="143.2" height="11" fill="#5fcbc4"/><rect x="540.8" y="209.8" width="125.2" height="11" fill="#418af5"/><rect x="666" y="209.8" width="83.4" height="11" fill="#fb9178"/><rect x="749.4" y="209.8" width="1.6" height="11" fill="#dc4b4b"/><rect x="371.6" y="225.6" width="24.6" height="11" fill="#7d52cf"/><rect x="396.2" y="225.6" width="138.8" height="11" fill="#5fcbc4"/><rect x="535" y="225.6" width="134.2" height="11" fill="#418af5"/><rect x="669.2" y="225.6" width="62.2" height="11" fill="#fb9178"/><rect x="731.4" y="225.6" width="1.4" height="11" fill="#dc4b4b"/><rect x="371.6" y="241.2" width="27.9" height="11" fill="#7d52cf"/><rect x="399.5" y="241.2" width="142.2" height="11" fill="#5fcbc4"/><rect x="541.7" y="241.2" width="121.4" height="11" fill="#418af5"/><rect x="663.1" y="241.2" width="48.9" height="11" fill="#fb9178"/><rect x="712" y="241.2" width="2.2" height="11" fill="#dc4b4b"/></svg>
<div class="t" style="left:351px;top:211.7px;font-size:6.3px;color:#555">2027</div>
<div class="t" style="left:351px;top:227.4px;font-size:6.3px;color:#555">2026</div>
<div class="t" style="left:351px;top:243.1px;font-size:6.3px;color:#555">2025</div>
<div class="t" style="left:352.2px;width:40px;text-align:center;top:261.5px;font-size:6.3px;color:#555">0 mill.</div>
<div class="t" style="left:432.7px;width:40px;text-align:center;top:261.5px;font-size:6.3px;color:#555">50 mill.</div>
<div class="t" style="left:513px;width:40px;text-align:center;top:261.5px;font-size:6.3px;color:#555">100 mill.</div>
<div class="t" style="left:594px;width:40px;text-align:center;top:261.5px;font-size:6.3px;color:#555">150 mill.</div>
<div class="t" style="left:674px;width:40px;text-align:center;top:261.5px;font-size:6.3px;color:#555">200 mill.</div>

<div class="card" style="left:56px;top:281px;width:273px;height:100px;background:#f8f8fa"></div>
<div class="a" style="left:61px;top:284px;width:138px;height:46px;background:#fcfcfd"></div>
<div class="t" style="left:62px;top:287.9px;font-size:7.7px;color:#333">Categoria Producto</div>
<div class="t" style="left:134px;top:287.9px;font-size:7.7px;color:#333">Suma de Ingresos</div>
<div class="a" style="left:61px;top:300.5px;width:138px;height:1.5px;background:#cbbde6"></div>
<div class="t" style="left:62px;top:304.8px;font-size:7.7px;color:#333">Digital</div>
<div class="t" style="left:138px;top:304.8px;width:60px;font-size:7.7px;color:#333;overflow:hidden;display:flex;justify-content:flex-end">816.910.282,08</div>
<div class="a" style="left:61px;top:314px;width:138px;height:10.5px;background:#ececee"></div>
<div class="t" style="left:62px;top:316.0px;font-size:7.7px;color:#333">Dispositivos</div>
<div class="t" style="left:138px;top:316.0px;width:60px;font-size:7.7px;color:#333;overflow:hidden;display:flex;justify-content:flex-end">2.546.523.925,12</div>
<div class="a" style="left:61px;top:324.5px;width:138px;height:1.5px;background:#cbbde6"></div>
<div class="t" style="left:62px;top:327.5px;font-size:7.7px;font-weight:bold;-webkit-text-stroke:0;color:#222">Total</div>
<div class="t" style="left:134px;top:327.5px;width:64px;font-size:7.7px;font-weight:bold;-webkit-text-stroke:0;color:#222;overflow:hidden;display:flex;justify-content:flex-end">3.363.434.207,20</div>

<div class="card" style="left:345px;top:282px;width:227px;height:99px;background:#faf9fc"></div>
<div class="t" style="left:349.4px;top:283.5px;font-size:8.8px;font-weight:bold;-webkit-text-stroke:0;color:#3a3a3a">Total Utilidad por Continente</div>
<svg class="a" style="left:345px;top:282px" width="227" height="99" viewBox="345 282 227 99"><path d="M433 337.5L433.00 306.20A31.3 31.3 0 0 1 452.74 361.79Z" fill="#5fcbc4" stroke="#fff" stroke-width="0.6"/><path d="M433 337.5L452.74 361.79A31.3 31.3 0 0 1 401.73 338.80Z" fill="#418af5" stroke="#fff" stroke-width="0.6"/><path d="M433 337.5L401.73 338.80A31.3 31.3 0 0 1 417.96 310.05Z" fill="#fb9178" stroke="#fff" stroke-width="0.6"/><path d="M433 337.5L417.96 310.05A31.3 31.3 0 0 1 431.74 306.23Z" fill="#7d52cf" stroke="#fff" stroke-width="0.6"/><path d="M433 337.5L431.74 306.23A31.3 31.3 0 0 1 433.00 306.20Z" fill="#dc4b4b" stroke="#fff" stroke-width="0.6"/><path d="M464 329.5L468 327.5H473" fill="none" stroke="#aaa" stroke-width="0.7"/><path d="M418 366L414 370H410" fill="none" stroke="#aaa" stroke-width="0.7"/><path d="M404 320.5H398" fill="none" stroke="#aaa" stroke-width="0.7"/><path d="M423 307L420 304H416" fill="none" stroke="#aaa" stroke-width="0.7"/></svg>
<div class="t" style="left:475.5px;top:322.5px;font-size:6.6px;color:#666">39,14%</div>
<div class="t" style="left:390.5px;top:366.9px;font-size:6.6px;color:#666">35,2%</div>
<div class="t" style="left:370.8px;top:316.8px;font-size:6.6px;color:#666">17,68%</div>
<div class="t" style="left:395.4px;top:300.3px;font-size:6.6px;color:#666">7,34%</div>
<div class="t" style="left:517.5px;top:298.5px;font-size:7.8px;font-weight:bold;-webkit-text-stroke:0;color:#444">Continente</div>
<div class="a" style="left:517.5px;top:311.4px;width:6px;height:6px;border-radius:50%;background:#5fcbc4"></div>
<div class="t" style="left:524.8px;top:311.4px;font-size:7.7px;color:#666">América</div>
<div class="a" style="left:517.5px;top:326.4px;width:6px;height:6px;border-radius:50%;background:#418af5"></div>
<div class="t" style="left:524.8px;top:326.4px;font-size:7.7px;color:#666">Asia</div>
<div class="a" style="left:517.5px;top:341.0px;width:6px;height:6px;border-radius:50%;background:#fb9178"></div>
<div class="t" style="left:524.8px;top:341.0px;font-size:7.7px;color:#666">Europa</div>
<div class="a" style="left:517.5px;top:355.7px;width:6px;height:6px;border-radius:50%;background:#7d52cf"></div>
<div class="t" style="left:524.8px;top:355.7px;font-size:7.7px;color:#666">África</div>
<svg class="a" style="left:540px;top:372px" width="6" height="4" viewBox="0 0 6 4"><path d="M0 0h6L3 4z" fill="#222"/></svg>

<div class="card" style="left:580px;top:281.5px;width:194.5px;height:100px;background:#faf9fc"></div>
<div class="t" style="left:584.7px;top:283.3px;font-size:8.9px;font-weight:bold;-webkit-text-stroke:0;color:#3a3a3a">Total Utilidad por Año y Continente</div>
<svg class="a" style="left:580px;top:281px" width="195" height="101" viewBox="580 281 195 101"><line x1="603" y1="301.8" x2="770" y2="301.8" stroke="#dddbe2" stroke-width="0.8" stroke-dasharray="1 2"/><line x1="603" y1="333" x2="770" y2="333" stroke="#dddbe2" stroke-width="0.8" stroke-dasharray="1 2"/><line x1="603" y1="364.2" x2="770" y2="364.2" stroke="#dddbe2" stroke-width="0.8" stroke-dasharray="1 2"/><rect x="625.3" y="301.8" width="34.6" height="13.8" fill="#fb9178"/><rect x="625.3" y="315.6" width="34.6" height="20.1" fill="#418af5"/><rect x="625.3" y="335.7" width="34.6" height="24.4" fill="#5fcbc4"/><rect x="625.3" y="360.1" width="34.6" height="4.1" fill="#7d52cf"/><rect x="671" y="301.8" width="34.6" height="10.9" fill="#fb9178"/><rect x="671" y="312.7" width="34.6" height="22.5" fill="#418af5"/><rect x="671" y="335.2" width="34.6" height="24.9" fill="#5fcbc4"/><rect x="671" y="360.1" width="34.6" height="4.1" fill="#7d52cf"/><rect x="717.3" y="301.8" width="34.6" height="9.1" fill="#fb9178"/><rect x="717.3" y="310.9" width="34.6" height="21.6" fill="#418af5"/><rect x="717.3" y="332.5" width="34.6" height="26.5" fill="#5fcbc4"/><rect x="717.3" y="359" width="34.6" height="5.2" fill="#7d52cf"/></svg>
<div class="t" style="left:570.5px;width:30px;text-align:right;top:298.2px;font-size:6.3px;color:#555">100%</div>
<div class="t" style="left:570.5px;width:30px;text-align:right;top:329.4px;font-size:6.3px;color:#555">50%</div>
<div class="t" style="left:570.5px;width:30px;text-align:right;top:360.6px;font-size:6.3px;color:#555">0%</div>
<div class="t" style="left:627.6px;width:30px;text-align:center;top:368px;font-size:6.6px;color:#555">2027</div>
<div class="t" style="left:673.3px;width:30px;text-align:center;top:368px;font-size:6.6px;color:#555">2026</div>
<div class="t" style="left:719.6px;width:30px;text-align:center;top:368px;font-size:6.6px;color:#555">2025</div>

<div class="card" style="left:56px;top:387px;width:273px;height:137px;background:#f8f8fa"></div>
<div class="a" style="left:60px;top:390px;width:213px;height:112px;background:#fcfcfd"></div>
<div class="t" style="left:62px;top:393.1px;font-size:7.7px;color:#333">Tipo Producto</div>
<div class="t" style="left:116px;top:393.1px;font-size:7.7px;color:#333">Total ingresos</div>
<div class="t" style="left:184px;top:393.1px;font-size:7.7px;color:#333">Total Utilidad</div>
<div class="t" style="left:241px;top:393.1px;font-size:7.7px;color:#333">Margen</div>
<svg class="a" style="left:241px;top:401px" width="6" height="4" viewBox="0 0 6 4"><path d="M0 0h6L3 4z" fill="#222"/></svg>
<div class="a" style="left:60px;top:405px;width:213px;height:1.5px;background:#cbbde6"></div>
<div class="a" style="left:240px;top:407.2px;width:30.0px;height:9.6px;background:#c5b2ec"></div>
<div class="t" style="left:62px;top:408.5px;font-size:7.7px;color:#333">Musica</div>
<div class="t" style="left:116px;top:408.5px;width:62px;font-size:7.7px;color:#333;overflow:hidden;display:flex;justify-content:flex-end">374.315.574,84</div>
<div class="t" style="left:185.5px;top:408.5px;width:50px;font-size:7.7px;color:#333;overflow:hidden;display:flex;justify-content:flex-end">146.174.402,5</div>
<div class="t" style="left:240px;top:408.5px;width:30px;font-size:7.7px;color:#333;overflow:hidden;display:flex;justify-content:flex-end">39,05 %</div>
<div class="a" style="left:60px;top:418.4px;width:213px;height:11.4px;background:#ececee"></div>
<div class="a" style="left:240px;top:419.3px;width:29.7px;height:9.6px;background:#c5b2ec"></div>
<div class="t" style="left:62px;top:420.6px;font-size:7.7px;color:#333">Aplicaciones</div>
<div class="t" style="left:116px;top:420.6px;width:62px;font-size:7.7px;color:#333;overflow:hidden;display:flex;justify-content:flex-end">310.165.564,35</div>
<div class="t" style="left:185.5px;top:420.6px;width:50px;font-size:7.7px;color:#333;overflow:hidden;display:flex;justify-content:flex-end">119.961.591,3</div>
<div class="t" style="left:240px;top:420.6px;width:30px;font-size:7.7px;color:#333;overflow:hidden;display:flex;justify-content:flex-end">38,68 %</div>
<div class="a" style="left:240px;top:431.3px;width:29.5px;height:9.6px;background:#c5b2ec"></div>
<div class="t" style="left:62px;top:432.6px;font-size:7.7px;color:#333">TV</div>
<div class="t" style="left:116px;top:432.6px;width:62px;font-size:7.7px;color:#333;overflow:hidden;display:flex;justify-content:flex-end">132.429.142,90</div>
<div class="t" style="left:185.5px;top:432.6px;width:50px;font-size:7.7px;color:#333;overflow:hidden;display:flex;justify-content:flex-end">50.800.381,9</div>
<div class="t" style="left:240px;top:432.6px;width:30px;font-size:7.7px;color:#333;overflow:hidden;display:flex;justify-content:flex-end">38,36 %</div>
<div class="a" style="left:60px;top:442.5px;width:213px;height:11.4px;background:#ececee"></div>
<div class="a" style="left:240px;top:443.4px;width:11.0px;height:9.6px;background:#c5b2ec"></div>
<div class="t" style="left:62px;top:444.7px;font-size:7.7px;color:#333">Accesorios</div>
<div class="t" style="left:116px;top:444.7px;width:62px;font-size:7.7px;color:#333;overflow:hidden;display:flex;justify-content:flex-end">185.068.352,64</div>
<div class="t" style="left:185.5px;top:444.7px;width:50px;font-size:7.7px;color:#333;overflow:hidden;display:flex;justify-content:flex-end">26.553.481,1</div>
<div class="t" style="left:240px;top:444.7px;width:30px;font-size:7.7px;color:#333;overflow:hidden;display:flex;justify-content:flex-end">14,35 %</div>
<div class="a" style="left:240px;top:455.5px;width:10.9px;height:9.6px;background:#c5b2ec"></div>
<div class="t" style="left:62px;top:456.8px;font-size:7.7px;color:#333">Tablets</div>
<div class="t" style="left:116px;top:456.8px;width:62px;font-size:7.7px;color:#333;overflow:hidden;display:flex;justify-content:flex-end">267.247.448,87</div>
<div class="t" style="left:185.5px;top:456.8px;width:50px;font-size:7.7px;color:#333;overflow:hidden;display:flex;justify-content:flex-end">37.866.154,4</div>
<div class="t" style="left:240px;top:456.8px;width:30px;font-size:7.7px;color:#333;overflow:hidden;display:flex;justify-content:flex-end">14,17 %</div>
<div class="a" style="left:60px;top:466.7px;width:213px;height:11.4px;background:#ececee"></div>
<div class="a" style="left:240px;top:467.6px;width:10.6px;height:9.6px;background:#c5b2ec"></div>
<div class="t" style="left:62px;top:468.9px;font-size:7.7px;color:#333">Celulares</div>
<div class="t" style="left:116px;top:468.9px;width:62px;font-size:7.7px;color:#333;overflow:hidden;display:flex;justify-content:flex-end">777.237.855,28</div>
<div class="t" style="left:185.5px;top:468.9px;width:50px;font-size:7.7px;color:#333;overflow:hidden;display:flex;justify-content:flex-end">107.565.919,1</div>
<div class="t" style="left:240px;top:468.9px;width:30px;font-size:7.7px;color:#333;overflow:hidden;display:flex;justify-content:flex-end">13,84 %</div>
<div class="a" style="left:240px;top:479.6px;width:10.6px;height:9.6px;background:#c5b2ec"></div>
<div class="t" style="left:62px;top:480.9px;font-size:7.7px;color:#333">PC</div>
<div class="t" style="left:116px;top:480.9px;width:62px;font-size:7.7px;color:#333;overflow:hidden;display:flex;justify-content:flex-end">1.316.970.268,33</div>
<div class="t" style="left:185.5px;top:480.9px;width:50px;font-size:7.7px;color:#333;overflow:hidden;display:flex;justify-content:flex-end">182.187.569,1</div>
<div class="t" style="left:240px;top:480.9px;width:30px;font-size:7.7px;color:#333;overflow:hidden;display:flex;justify-content:flex-end">13,83 %</div>
<div class="a" style="left:60px;top:490px;width:213px;height:1.5px;background:#cbbde6"></div>
<div class="t" style="left:62px;top:494.1px;font-size:7.7px;font-weight:bold;-webkit-text-stroke:0;color:#222">Total</div>
<div class="t" style="left:116px;top:494.1px;width:62px;font-size:7.7px;font-weight:bold;-webkit-text-stroke:0;color:#222;overflow:hidden;display:flex;justify-content:flex-end">3.363.434.207,20</div>
<div class="t" style="left:183.5px;top:494.1px;width:52px;font-size:7.7px;font-weight:bold;-webkit-text-stroke:0;color:#222;overflow:hidden;display:flex;justify-content:flex-end">671.109.499,3</div>
<div class="t" style="left:240px;top:494.1px;width:30px;font-size:7.7px;font-weight:bold;-webkit-text-stroke:0;color:#222;overflow:hidden;display:flex;justify-content:flex-end">19,95 %</div>

<div class="card" style="left:346px;top:386px;width:429px;height:138px;background:#faf9fc"></div>
<div class="t" style="left:349.7px;top:388.8px;font-size:8.85px;font-weight:bold;-webkit-text-stroke:0;color:#3a3a3a">Total Utilidad por Periodos</div>
<svg class="a" style="left:346px;top:386px" width="429" height="138" viewBox="346 386 429 138"><line x1="379" y1="441.1" x2="772" y2="441.1" stroke="#dddbe2" stroke-width="0.8" stroke-dasharray="1 2"/><line x1="379" y1="483.1" x2="772" y2="483.1" stroke="#dddbe2" stroke-width="0.8" stroke-dasharray="1 2"/><polyline points="421.5,498.9 524.6,484.4 628,410.5 731.3,442.4" fill="none" stroke="#7d4fc6" stroke-width="1.9" stroke-linejoin="round"/></svg>
<div class="t" style="left:350px;top:437.5px;font-size:6.55px;color:#555">170 mill.</div>
<div class="t" style="left:350px;top:479.5px;font-size:6.55px;color:#555">165 mill.</div>
<div class="t" style="left:406.5px;width:30px;text-align:center;top:511px;font-size:6.5px;color:#555">Trim1</div>
<div class="t" style="left:509.6px;width:30px;text-align:center;top:511px;font-size:6.5px;color:#555">Trim2</div>
<div class="t" style="left:613px;width:30px;text-align:center;top:511px;font-size:6.5px;color:#555">Trim3</div>
<div class="t" style="left:716.3px;width:30px;text-align:center;top:511px;font-size:6.5px;color:#555">Trim4</div>

<div class="a" style="left:20px;top:110px;width:2px;height:28px;background:#117865"></div>
<svg class="a" style="left:29.5px;top:119px" width="9" height="10" viewBox="0 0 9 10"><path d="M0 0h2.8l4 5.2V1.2H9V9.5H0z" fill="#111"/></svg>
<div class="a" style="left:29px;top:146.5px;width:11px;height:10.5px;background:#5a5a5a"></div>
<svg class="a" style="left:27.5px;top:173.5px" width="14" height="13" viewBox="0 0 14 13"><rect x="0" y="3.5" width="3.5" height="5" fill="#444"/><rect x="3.5" y="4.5" width="3" height="3" fill="#444"/><rect x="7.5" y="0" width="5.5" height="5" fill="#444"/><rect x="7.5" y="7" width="5.5" height="5.5" fill="#444"/><path d="M6.5 6h1" stroke="#444"/></svg>
<svg class="a" style="left:26px;top:203px" width="16" height="12" viewBox="0 0 16 12"><path d="M5 0.5h4l3 3v5H5z" fill="none" stroke="#8a8a8a" stroke-width="0.9"/><path d="M9 0.5v3h3" fill="none" stroke="#8a8a8a" stroke-width="0.7"/><text x="8" y="11.3" font-size="5" font-weight="bold" text-anchor="middle" fill="#8a8a8a" font-family="Liberation Sans">DAX</text></svg>
<svg class="a" style="left:26px;top:229.5px" width="16" height="13" viewBox="0 0 16 13"><path d="M5 0.5h4l3 3v6H5z" fill="none" stroke="#777" stroke-width="0.9"/><path d="M9 0.5v3h3" fill="none" stroke="#777" stroke-width="0.7"/><text x="8" y="12.3" font-size="4.6" font-weight="bold" text-anchor="middle" fill="#666" font-family="Liberation Sans">TMDL</text></svg>
<div class="a" style="left:49px;top:110px;width:744px;height:416px;border-right:1px dotted rgba(60,30,110,0.45);border-bottom:1px dotted rgba(60,30,110,0.45)"></div>
<svg class="a" style="left:806px;top:118px" width="10" height="10" viewBox="0 0 10 10"><path d="M5 1L1 5l4 4M9 1L5 5l4 4" fill="none" stroke="#fff" stroke-width="1.1"/></svg>
<svg class="a" style="left:808px;top:138.5px" width="10" height="9" viewBox="0 0 10 9"><path d="M8.5 0.8v7.4L4.5 5.5H1.2V3.5h3.3z" fill="none" stroke="#fff" stroke-width="1.2" stroke-linejoin="round"/></svg>
<div class="t" style="left:807.5px;top:154px;font-size:9.8px;font-weight:bold;-webkit-text-stroke:0;color:#fff;writing-mode:vertical-rl">Filtros</div>
<div class="t" style="left:828.8px;top:118.8px;font-size:10.5px;font-weight:bold;-webkit-text-stroke:0;color:#252423">Compilar</div>
<svg class="a" style="left:917px;top:121px" width="13" height="5" viewBox="0 0 13 5"><circle cx="2" cy="2.5" r="0.9" fill="#444"/><circle cx="6.5" cy="2.5" r="0.9" fill="#444"/><circle cx="11" cy="2.5" r="0.9" fill="#444"/></svg>
<svg class="a" style="left:934px;top:118px" width="10" height="10" viewBox="0 0 10 10"><path d="M1 1l4 4-4 4M5 1l4 4-4 4" fill="none" stroke="#444" stroke-width="1"/></svg>
<div class="t" style="left:828.8px;top:137.7px;font-size:7.9px;color:#333">Sugerencias</div>
<div class="a" style="left:828.5px;top:150.5px;width:115px;height:149px;background:#fff;border:1px solid #c8c6c4;border-radius:2px"></div>
<svg class="a" style="left:833.6px;top:155.0px" width="13" height="13"><use href="#sbar"/></svg>
<svg class="a" style="left:851.9px;top:155.0px" width="13" height="13"><use href="#scol"/></svg>
<svg class="a" style="left:870.1px;top:155.0px" width="13" height="13"><use href="#cbar"/></svg>
<svg class="a" style="left:888.4px;top:155.0px" width="13" height="13"><use href="#ccol"/></svg>
<svg class="a" style="left:906.7px;top:155.0px" width="13" height="13"><use href="#bar100"/></svg>
<svg class="a" style="left:925.0px;top:155.0px" width="13" height="13"><use href="#col100"/></svg>
<svg class="a" style="left:833.6px;top:173.2px" width="13" height="13"><use href="#line"/></svg>
<svg class="a" style="left:851.9px;top:173.2px" width="13" height="13"><use href="#area"/></svg>
<svg class="a" style="left:870.1px;top:173.2px" width="13" height="13"><use href="#sarea"/></svg>
<svg class="a" style="left:888.4px;top:173.2px" width="13" height="13"><use href="#area100"/></svg>
<svg class="a" style="left:906.7px;top:173.2px" width="13" height="13"><use href="#lcol"/></svg>
<svg class="a" style="left:925.0px;top:173.2px" width="13" height="13"><use href="#lcc"/></svg>
<svg class="a" style="left:833.6px;top:191.4px" width="13" height="13"><use href="#ribb"/></svg>
<svg class="a" style="left:851.9px;top:191.4px" width="13" height="13"><use href="#water"/></svg>
<svg class="a" style="left:870.1px;top:191.4px" width="13" height="13"><use href="#funnel"/></svg>
<svg class="a" style="left:888.4px;top:191.4px" width="13" height="13"><use href="#scat"/></svg>
<svg class="a" style="left:906.7px;top:191.4px" width="13" height="13"><use href="#pie"/></svg>
<svg class="a" style="left:925.0px;top:191.4px" width="13" height="13"><use href="#donut"/></svg>
<svg class="a" style="left:833.6px;top:209.6px" width="13" height="13"><use href="#tree"/></svg>
<svg class="a" style="left:851.9px;top:209.6px" width="13" height="13"><use href="#map"/></svg>
<svg class="a" style="left:870.1px;top:209.6px" width="13" height="13"><use href="#fmap"/></svg>
<svg class="a" style="left:888.4px;top:209.6px" width="13" height="13"><use href="#smap"/></svg>
<svg class="a" style="left:906.7px;top:209.6px" width="13" height="13"><use href="#azure"/></svg>
<svg class="a" style="left:925.0px;top:209.6px" width="13" height="13"><use href="#gauge"/></svg>
<svg class="a" style="left:833.6px;top:227.8px" width="13" height="13"><use href="#card"/></svg>
<svg class="a" style="left:851.9px;top:227.8px" width="13" height="13"><use href="#card2"/></svg>
<svg class="a" style="left:870.1px;top:227.8px" width="13" height="13"><use href="#mcard"/></svg>
<svg class="a" style="left:888.4px;top:227.8px" width="13" height="13"><use href="#kpi"/></svg>
<svg class="a" style="left:906.7px;top:227.8px" width="13" height="13"><use href="#slic"/></svg>
<svg class="a" style="left:925.0px;top:227.8px" width="13" height="13"><use href="#table"/></svg>
<svg class="a" style="left:833.6px;top:246.0px" width="13" height="13"><use href="#matrix"/></svg>
<svg class="a" style="left:851.9px;top:246.0px" width="13" height="13"><use href="#R"/></svg>
<svg class="a" style="left:870.1px;top:246.0px" width="13" height="13"><use href="#Py"/></svg>
<svg class="a" style="left:888.4px;top:246.0px" width="13" height="13"><use href="#keyi"/></svg>
<svg class="a" style="left:906.7px;top:246.0px" width="13" height="13"><use href="#decomp"/></svg>
<svg class="a" style="left:925.0px;top:246.0px" width="13" height="13"><use href="#qa"/></svg>
<svg class="a" style="left:833.6px;top:264.2px" width="13" height="13"><use href="#narr"/></svg>
<svg class="a" style="left:851.9px;top:264.2px" width="13" height="13"><use href="#troph"/></svg>
<svg class="a" style="left:870.1px;top:264.2px" width="13" height="13"><use href="#pagin"/></svg>
<svg class="a" style="left:888.4px;top:264.2px" width="13" height="13"><use href="#papps"/></svg>
<svg class="a" style="left:906.7px;top:264.2px" width="13" height="13"><use href="#papps2"/></svg>
<svg class="a" style="left:925.0px;top:264.2px" width="13" height="13"><use href="#papps2"/></svg>
<svg class="a" style="left:833.6px;top:282.4px" width="13" height="13"><use href="#img"/></svg>
<svg class="a" style="left:851.9px;top:282.4px" width="13" height="13"><use href="#custom"/></svg>
<svg class="a" style="left:870.1px;top:282.4px" width="13" height="13"><use href="#fabric"/></svg>
<svg class="a" style="left:888.4px;top:282.4px" width="13" height="13"><use href="#pauto"/></svg>
<svg class="a" style="left:906.7px;top:282.4px" width="13" height="13"><use href="#dots"/></svg>
<div class="t" style="left:829px;top:308px;font-size:8px;color:#333">Datos</div>
<div class="a" style="left:828.7px;top:320.5px;width:115.3px;height:27.7px;border:1px dashed #b5b3b1"></div>
<div class="a" style="left:832px;top:324.2px;width:108.7px;height:20.2px;background:#fff;border:1px solid #8a8886;border-radius:2px"></div>
<div class="t s" style="left:832px;width:108.7px;text-align:center;top:330.5px;font-size:8.6px;color:#252423">Agregar datos</div>
<div class="t" style="left:954px;top:118.8px;font-size:10.5px;font-weight:bold;-webkit-text-stroke:0;color:#252423">D</div>
<div class="a" style="left:952px;top:144px;width:12px;height:14px;background:#fff;border:1px solid #c8c6c4;border-radius:2px"></div>
<div class="a" style="left:823px;top:531px;width:1px;height:24px;background:#e6e4e2"></div>
<svg class="a" style="left:56px;top:535px" width="16" height="12" viewBox="0 0 16 12"><rect x="1" y="1" width="14" height="8" fill="#fff" stroke="#555" stroke-width="1.1"/><path d="M6 11.5h4L8 9.5z" fill="#555"/></svg>
<div class="a" style="left:56px;top:550.5px;width:16px;height:2px;background:#117865"></div>
<div class="a" style="left:90px;top:534.5px;width:9.5px;height:14px;border:1.1px solid #666;border-radius:1.5px"></div>
<div class="a" style="left:94px;top:545px;width:2px;height:1.5px;background:#666"></div>
<svg class="a" style="left:114px;top:539px" width="6" height="8" viewBox="0 0 6 8"><path d="M4.5 1L1.5 4l3 3" fill="none" stroke="#c0c0c0" stroke-width="0.9"/></svg>
<svg class="a" style="left:129px;top:539px" width="6" height="8" viewBox="0 0 6 8"><path d="M1.5 1l3 3-3 3" fill="none" stroke="#c0c0c0" stroke-width="0.9"/></svg>
<div class="a" style="left:138.3px;top:531px;width:61px;height:24px;background:#fff;border-bottom:2.5px solid #117865"></div>
<div class="t s" style="left:138.3px;width:61px;text-align:center;top:538.5px;font-size:8.6px;color:#252423">Página 1</div>
<div class="a" style="left:199.2px;top:531px;width:26.5px;height:24px;background:#117865"></div>
<svg class="a" style="left:207px;top:537px" width="11" height="11" viewBox="0 0 11 11"><path d="M5.5 1v9M1 5.5h9" stroke="#fff" stroke-width="2"/></svg>
<div class="t s" style="left:22.5px;top:561.5px;font-size:8.3px;color:#555">Página 1 de 1</div>
<div class="a" style="left:0px;top:567.5px;width:974px;height:22px;background:#fff"></div>
<div class="t" style="left:948px;top:559px;font-size:8px;color:#666">- -</div>
<div class="a" style="left:960px;top:0;width:14px;height:589px;background:#fff"></div>
</body></html>
